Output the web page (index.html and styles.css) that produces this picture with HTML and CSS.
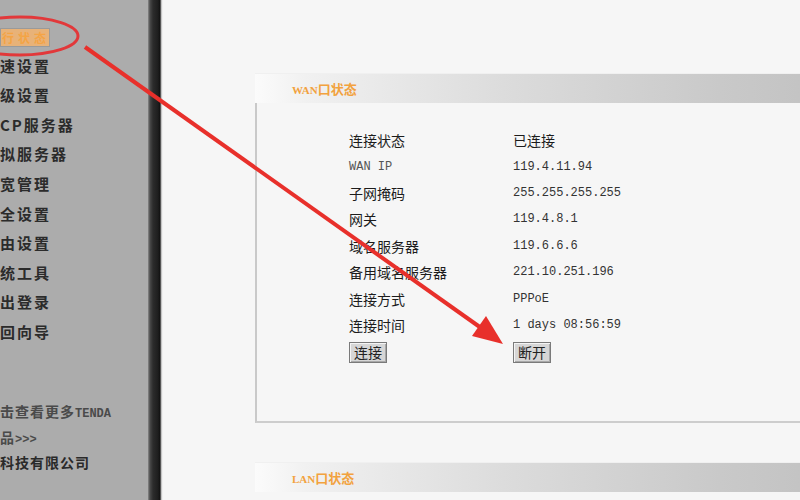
FILE: index.html
```html
<!DOCTYPE html>
<html lang="zh-CN">
<head>
    <meta charset="UTF-8">
    <title>WAN口状态</title>
    <link rel="stylesheet" href="styles.css">
</head>
<body>
    <div class="page">
        <aside class="sidebar">
            <ul class="menu">
                <li><span class="current">行状态</span></li>
                <li>速设置</li>
                <li>级设置</li>
                <li>CP服务器</li>
                <li>拟服务器</li>
                <li>宽管理</li>
                <li>全设置</li>
                <li>由设置</li>
                <li>统工具</li>
                <li>出登录</li>
                <li>回向导</li>
            </ul>
            <div class="side-foot">
                <p class="more">击查看更多<span class="latin">TENDA</span></p>
                <p class="more">品<span class="latin">&gt;&gt;&gt;</span></p>
                <p class="company">科技有限公司</p>
            </div>
        </aside>
        <div class="divider"></div>
        <main class="main">
            <section class="panel">
                <div class="panel-head"><span class="latin">WAN</span>口状态</div>
                <div class="panel-body">
                    <div class="info">
                        <span class="label">连接状态</span><span class="value cjk">已连接</span>
                        <span class="label mono">WAN IP</span><span class="value">119.4.11.94</span>
                        <span class="label">子网掩码</span><span class="value">255.255.255.255</span>
                        <span class="label">网关</span><span class="value">119.4.8.1</span>
                        <span class="label">域名服务器</span><span class="value">119.6.6.6</span>
                        <span class="label">备用域名服务器</span><span class="value">221.10.251.196</span>
                        <span class="label">连接方式</span><span class="value">PPPoE</span>
                        <span class="label">连接时间</span><span class="value">1 days 08:56:59</span>
                        <span><button class="btn">连接</button></span><span><button class="btn">断开</button></span>
                    </div>
                </div>
            </section>
            <section class="panel lan">
                <div class="panel-head"><span class="latin">LAN</span>口状态</div>
            </section>
        </main>
    </div>

    <!-- red annotation drawn over the screenshot -->
    <svg class="marks" width="800" height="500" viewBox="0 0 800 500">
        <ellipse cx="20" cy="36" rx="58" ry="19" fill="none" stroke="#e2383a" stroke-width="3"/>
        <line x1="85" y1="47" x2="484" y2="330" stroke="#e8302b" stroke-width="4"/>
        <polygon points="503,344 486,316 472,336" fill="#e8302b"/>
    </svg>
</body>
</html>
```

FILE: styles.css
```css
* {
    margin: 0;
    padding: 0;
    box-sizing: border-box;
}
body {
    width: 800px;
    height: 500px;
    overflow: hidden;
    position: relative;
    background: #f6f6f6;
    font-family: "Noto Sans CJK SC", "DejaVu Sans", sans-serif;
    color: #1c1c1c;
}
.page {
    display: flex;
    height: 500px;
}
.sidebar {
    width: 148px;
    flex-shrink: 0;
    background: #acacac;
    padding-top: 21px;
    overflow: hidden;
}
.menu {
    list-style: none;
}
.menu li {
    height: 29.6px;
    line-height: 29.6px;
    font-size: 15px;
    font-weight: bold;
    letter-spacing: 2px;
    color: #2b2b2b;
    white-space: nowrap;
}
.menu .current {
    display: inline-block;
    vertical-align: middle;
    width: 50px;
    height: 19px;
    line-height: 17px;
    padding-left: 1px;
    font-size: 12px;
    letter-spacing: 4px;
    color: #f4a445;
    background: #e8b278;
    border: 1px solid #9a9a9a;
}
.side-foot {
    margin-top: 53px;
}
.side-foot p {
    white-space: nowrap;
    font-weight: bold;
}
.more {
    font-size: 14px;
    line-height: 23px;
    color: #4a4a4a;
    letter-spacing: 1px;
}
.more .latin {
    font-family: "Liberation Mono", monospace;
    font-size: 12px;
    letter-spacing: 0;
}
.company {
    font-size: 14px;
    line-height: 20px;
    letter-spacing: 1px;
    color: #2a2a2a;
}
.divider {
    width: 15px;
    flex-shrink: 0;
    background: linear-gradient(to right, #8a8a8a 0, #4a4a4a 2px, #2c2c2c 5px, #1e1e1e 10px, #111 12px, #9a9a9a 13px, #eeeeee 14px);
}
.main {
    flex: 1;
    overflow: hidden;
    padding: 73px 0 0 92px;
}
.panel {
    width: 620px;
}
.panel-head {
    height: 30px;
    line-height: 30px;
    padding-left: 37px;
    font-size: 13px;
    font-weight: bold;
    color: #f2a23e;
    border-top: 1px solid #f0f0f0;
    background: linear-gradient(to right, #fbfbfb 0%, #f1f1f1 8%, #dcdcdc 40%, #c9c9c9 75%, #bfbfbf 100%);
}
.panel-head .latin {
    font-family: "Liberation Serif", serif;
    font-size: 11px;
}
.panel-body {
    height: 320px;
    border-left: 2px solid #c9c9c9;
    border-bottom: 2px solid #cdcdcd;
    padding: 24px 0 0 92px;
}
.info {
    display: grid;
    grid-template-columns: 164px auto;
    grid-auto-rows: 26.4px;
    align-items: center;
}
.label {
    font-size: 14px;
    color: #1c1c1c;
}
.value {
    font-family: "Liberation Mono", monospace;
    font-size: 12px;
    color: #333;
}
.value.cjk {
    font-family: "Noto Sans CJK SC", sans-serif;
    font-size: 14px;
    color: #1c1c1c;
}
.mono {
    font-family: "Liberation Mono", monospace;
    font-size: 12px;
    color: #555;
}
.btn {
    font-family: "Noto Sans CJK SC", sans-serif;
    font-size: 14px;
    line-height: 17px;
    padding: 1px 4px;
    color: #222;
    background: #d6d6d6;
    border: 1px solid #7a7a7a;
    box-shadow: inset 1px 1px 0 #f4f4f4, inset -1px -1px 0 #a8a8a8;
}
.lan {
    margin-top: 39px;
}
.marks {
    position: absolute;
    left: 0;
    top: 0;
    pointer-events: none;
}
```
